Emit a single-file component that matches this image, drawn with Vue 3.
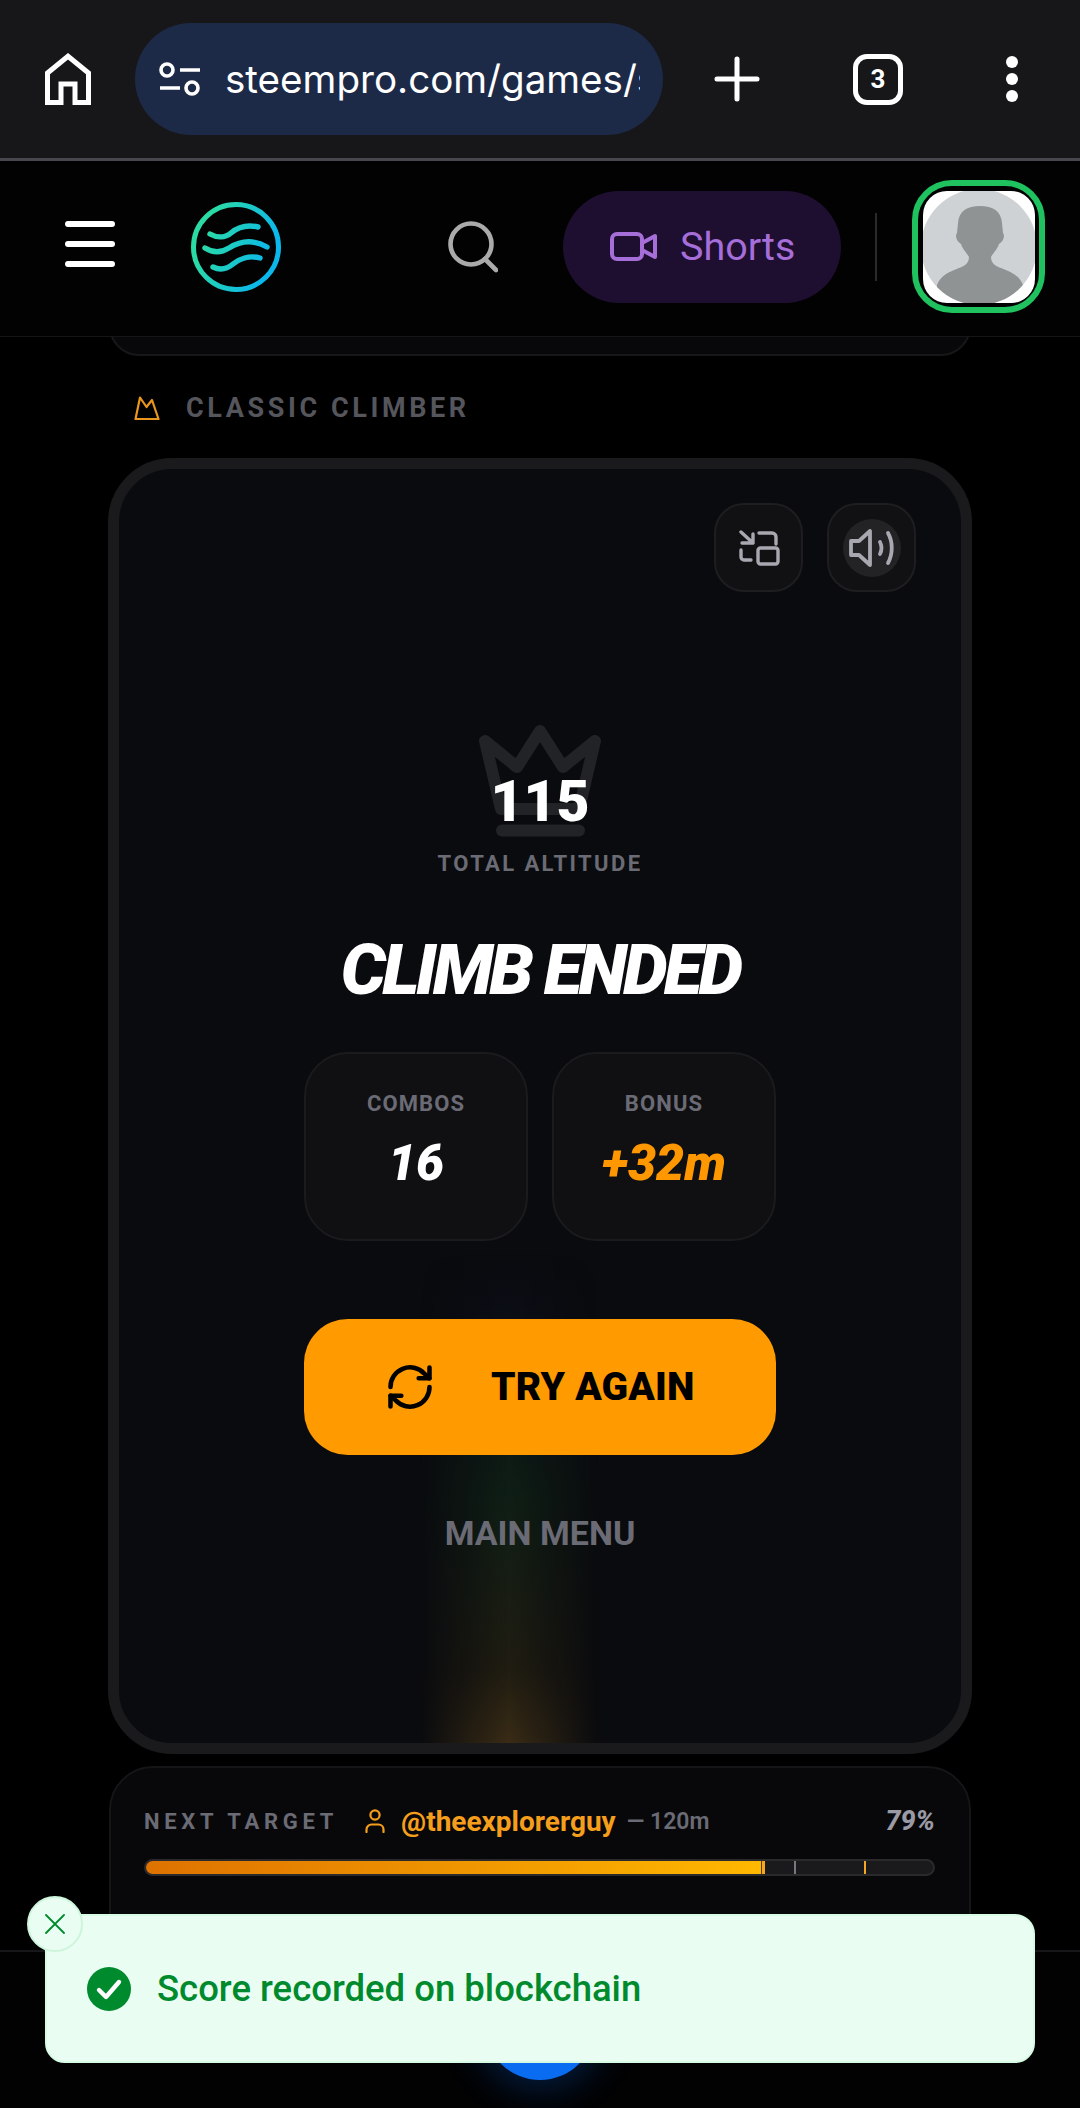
<script setup>
const stats = [
  { label: 'COMBOS', value: '16', accent: false },
  { label: 'BONUS', value: '+32m', accent: true }
]
const markers = [
  { left: 82.4, color: '#77777f' },
  { left: 91.2, color: '#f5a623' }
]
</script>

<template>
  <div class="screen">
    <div class="browser">
      <svg class="home" viewBox="0 0 46 52" fill="none" stroke="#fff" stroke-width="5">
        <path d="M2.5 49.5V20L23 3.2 43.5 20v29.5H30V31H16v18.5z" />
      </svg>
      <div class="url">
        <svg class="tune" viewBox="0 0 42 34" fill="none" stroke="#fff" stroke-width="3.6">
          <circle cx="8" cy="8" r="6" />
          <path d="M21 8h20M1 26h20" />
          <circle cx="33" cy="26" r="6" />
        </svg>
        <span class="url-text">steempro.com/games/s</span>
      </div>
      <svg class="plus" viewBox="0 0 46 46" fill="none" stroke="#fff" stroke-width="5" stroke-linecap="round">
        <path d="M23 3v40M3 23h40" />
      </svg>
      <div class="tabs">3</div>
      <div class="dots"><i></i><i></i><i></i></div>
    </div>

    <header class="topbar">
      <div class="burger"><i></i><i></i><i></i></div>
      <svg class="logo" viewBox="0 0 90 90" fill="none" stroke-width="5.4" stroke-linecap="round">
        <defs>
          <linearGradient id="logoGrad" gradientUnits="userSpaceOnUse" x1="5" y1="30" x2="85" y2="60">
            <stop offset="0.1" stop-color="#2bdba4" />
            <stop offset="0.9" stop-color="#0bb8ec" />
          </linearGradient>
        </defs>
        <circle cx="45" cy="45" r="42.5" stroke="url(#logoGrad)" stroke-width="5" />
        <path d="M19 32C26 36 34 36 40 31S54 22 67 25" stroke="url(#logoGrad)" />
        <path d="M14 46C22 51 30 51 38 46S60 36 76 45" stroke="url(#logoGrad)" />
        <path d="M22 65C30 69 36 67 42 62S58 53 69 56" stroke="url(#logoGrad)" />
      </svg>
      <svg class="search" viewBox="0 0 51 52" fill="none" stroke="#aaa" stroke-width="4.6" stroke-linecap="round">
        <circle cx="24" cy="23" r="20.5" />
        <path d="M38 38l11 11" />
      </svg>
      <div class="shorts">
        <svg viewBox="0 0 47 29" fill="none" stroke="#a56ed8" stroke-width="4" stroke-linejoin="round">
          <rect x="2" y="2" width="30" height="25" rx="5" />
          <path d="M32 11l13-7v21l-13-7z" />
        </svg>
        <span>Shorts</span>
      </div>
      <div class="vline"></div>
      <div class="avatar-ring">
        <div class="avatar">
          <div class="avatar-face">
            <svg viewBox="0 0 112 112">
              <path fill="#909394" d="M57 15C44 15 36 20 35 32L34 42C32 44 33 50 38 53 40 59 44 62 46 66 46 72 42 75 36 77 26 81 18 84 14 94V112H100V94C96 84 88 81 78 77 72 75 68 72 68 66 70 62 74 59 76 53 81 50 82 44 80 42L79 32C78 20 70 15 57 15z" />
            </svg>
          </div>
        </div>
      </div>
    </header>

    <main class="content">
      <div class="prev-card"></div>

      <div class="section-label">
        <svg viewBox="0 0 26 24" fill="none" stroke="#e8961e" stroke-width="2.2" stroke-linejoin="round">
          <path d="M1.5 23 6 1.5l6.5 9.5L18 4l6.5 19z" />
        </svg>
        <span>CLASSIC CLIMBER</span>
      </div>

      <section class="game">
        <div class="glow-strip"></div>
        <div class="game-tools">
          <button class="tool">
            <svg viewBox="0 0 42 36" fill="none" stroke="#a8a8b0" stroke-width="3.4" stroke-linecap="round" stroke-linejoin="round">
              <path d="M3 2l12 11M15 4v9H4" />
              <path d="M21 3h13a4 4 0 0 1 4 4v7" />
              <path d="M3 20v7a3 3 0 0 0 3 3h7" />
              <rect x="20" y="18" width="20" height="16" rx="2.5" />
            </svg>
          </button>
          <button class="tool">
            <span class="tool-inner">
              <svg viewBox="0 0 47 38" fill="none" stroke="#a8a8b0" stroke-width="3.8" stroke-linecap="round" stroke-linejoin="round">
                <path d="M3 12h8L22 2v34L11 26H3z" />
                <path d="M32 13c2 4 2 8 0 12" />
                <path d="M40 4c5 9 5 21 0 30" />
              </svg>
            </span>
          </button>
        </div>

        <div class="score">
          <svg class="score-crown" viewBox="0 0 124 114" fill="none" stroke="#222327" stroke-width="12" stroke-linecap="round" stroke-linejoin="round">
            <path d="M23 85 7 17l32 26L62 7l23 36 32-26-16 68z" />
            <path d="M24 106.5h77" />
          </svg>
          <div class="score-num">115</div>
          <div class="score-label">TOTAL ALTITUDE</div>
        </div>

        <h1 class="title">CLIMB ENDED</h1>

        <div class="stats">
          <div v-for="s in stats" :key="s.label" class="stat">
            <div class="stat-label">{{ s.label }}</div>
            <div class="stat-value" :class="{ 'stat-value--accent': s.accent }">{{ s.value }}</div>
          </div>
        </div>

        <button class="again">
          <svg viewBox="0 0 24 24" fill="none" stroke="#000" stroke-width="2.1" stroke-linecap="round" stroke-linejoin="round">
            <path d="M21 3v5h-5" />
            <path d="M3 12a9 9 0 0 1 15.5-6.3L21 8" />
            <path d="M21 12a9 9 0 0 1-15.5 6.3L3 16" />
            <path d="M3 21v-5h5" />
          </svg>
          <span>TRY AGAIN</span>
        </button>

        <div class="menu-link">MAIN MENU</div>
      </section>

      <section class="target">
        <div class="target-row">
          <span class="target-label">NEXT TARGET</span>
          <svg class="person" viewBox="0 0 20 24" fill="none" stroke="#f59e1b" stroke-width="2.2" stroke-linecap="round">
            <circle cx="10" cy="6" r="4.6" />
            <path d="M1.5 23v-2.5a5 5 0 0 1 5-5h7a5 5 0 0 1 5 5V23" />
          </svg>
          <span class="target-name">@theexplorerguy</span>
          <span class="target-dist">— 120m</span>
          <span class="target-pct">79%</span>
        </div>
        <div class="bar">
          <div class="bar-fill" :style="{ width: '78.7%' }"></div>
          <i class="bar-mark bar-mark--first"></i>
          <i v-for="m in markers" :key="m.left" class="bar-mark" :style="{ left: m.left + '%', background: m.color }"></i>
        </div>
      </section>
    </main>

    <nav class="bottomnav">
      <div class="fab"></div>
    </nav>

    <div class="toast">
      <button class="toast-close">
        <svg viewBox="0 0 20 20" fill="none" stroke="#008a2e" stroke-width="1.8" stroke-linecap="round">
          <path d="M1 1l18 18M19 1 1 19" />
        </svg>
      </button>
      <svg class="toast-check" viewBox="0 0 44 44">
        <circle cx="22" cy="22" r="22" fill="#008a2e" />
        <path d="M12 23l7 7 13-15" fill="none" stroke="#fff" stroke-width="4.4" stroke-linecap="round" stroke-linejoin="round" />
      </svg>
      <span class="toast-text">Score recorded on blockchain</span>
    </div>
  </div>
</template>

<style>
html, body {
  margin: 0;
  background: #000;
}
</style>

<style scoped>
.screen {
  position: relative;
  width: 1080px;
  height: 2108px;
  overflow: hidden;
  background: #000;
  font-family: Roboto, "Liberation Sans", sans-serif;
}

/* browser chrome */
.browser {
  position: relative;
  z-index: 2;
  display: flex;
  align-items: center;
  height: 161px;
  padding-left: 45px;
  box-sizing: border-box;
  background: #17171a;
  border-bottom: 3px solid #47474d;
}
.home {
  width: 46px;
  height: 52px;
  flex: none;
}
.url {
  display: flex;
  align-items: center;
  flex: none;
  width: 528px;
  height: 112px;
  margin-left: 44px;
  padding: 0 23px 0 24px;
  box-sizing: border-box;
  border-radius: 56px;
  background: #1d2a47;
  color: #fff;
}
.tune {
  width: 42px;
  height: 34px;
  flex: none;
}
.url-text {
  margin-left: 24px;
  min-width: 0;
  font-size: 38.6px;
  font-family: Inter, Roboto, sans-serif;
  white-space: nowrap;
  overflow: hidden;
}
.plus {
  width: 46px;
  height: 46px;
  flex: none;
  margin-left: 51px;
}
.tabs {
  flex: none;
  width: 50px;
  height: 51px;
  margin-left: 93px;
  box-sizing: border-box;
  border: 5px solid #fff;
  border-radius: 14px;
  color: #fff;
  font-size: 26px;
  font-weight: 700;
  line-height: 41px;
  text-align: center;
}
.dots {
  display: flex;
  flex-direction: column;
  gap: 5px;
  margin-left: 103px;
}
.dots i {
  width: 12px;
  height: 12px;
  border-radius: 50%;
  background: #fff;
}

/* site header */
.topbar {
  position: relative;
  z-index: 1;
  display: flex;
  align-items: center;
  height: 176px;
  box-sizing: border-box;
  padding: 0 0 4px 65px;
  border-bottom: 1px solid #151518;
  background: #020203;
}
.burger {
  display: flex;
  flex-direction: column;
  gap: 14px;
  margin-bottom: 6px;
}
.burger i {
  width: 50px;
  height: 6px;
  border-radius: 3px;
  background: #fff;
}
.logo {
  width: 90px;
  height: 90px;
  margin-left: 76px;
}
.search {
  width: 51px;
  height: 52px;
  margin-left: 166px;
}
.shorts {
  display: flex;
  align-items: center;
  gap: 23px;
  width: 278px;
  height: 112px;
  margin-left: 65px;
  padding-left: 47px;
  box-sizing: border-box;
  border-radius: 56px;
  background: #1e0f30;
  color: #a56ed8;
  font-size: 39.5px;
}
.shorts svg {
  width: 47px;
  height: 29px;
}
.vline {
  width: 2px;
  height: 68px;
  margin-left: 34px;
  background: #2a2a2d;
}
.avatar-ring {
  display: flex;
  align-items: center;
  justify-content: center;
  width: 133px;
  height: 133px;
  margin-left: 35px;
  box-sizing: border-box;
  border: 6px solid #1fc25f;
  border-radius: 40px;
  background: #000;
}
.avatar {
  display: flex;
  align-items: center;
  justify-content: center;
  width: 112px;
  height: 112px;
  border-radius: 24px;
  background: #fff;
  overflow: hidden;
}
.avatar-face {
  flex: none;
  width: 116px;
  height: 116px;
  border-radius: 50%;
  background: #cfd2d4;
  overflow: hidden;
}
.avatar-face svg {
  display: block;
  width: 112px;
  height: 112px;
  margin: 2px;
}

/* page content */
.content {
  display: flex;
  flex-direction: column;
  align-items: center;
}
.prev-card {
  width: 862px;
  height: 60px;
  margin-top: -41px;
  flex: none;
  box-sizing: border-box;
  border: 2px solid #17171a;
  border-radius: 40px;
  background: #08080a;
}
.section-label {
  display: flex;
  align-items: center;
  align-self: flex-start;
  gap: 26px;
  margin: 40px 0 0 134px;
  height: 24px;
  color: #55555c;
  font-size: 27px;
  font-weight: 700;
  letter-spacing: 3.6px;
}
.section-label svg {
  width: 26px;
  height: 24px;
}

.game {
  position: relative;
  display: flex;
  flex-direction: column;
  align-items: center;
  width: 864px;
  height: 1296px;
  margin-top: 38px;
  box-sizing: border-box;
  border: 11px solid #1a1a1d;
  border-radius: 64px;
  background: #0a0b0e;
  overflow: hidden;
}
.game > * {
  position: relative;
}
.game > .glow-strip {
  position: absolute;
  left: 300px;
  bottom: 0;
  width: 180px;
  height: 490px;
  background: linear-gradient(180deg, rgba(30, 40, 110, 0) 0%, rgba(30, 40, 110, 0.08) 12%, rgba(30, 110, 50, 0.2) 50%, rgba(120, 100, 30, 0.2) 85%, rgba(170, 120, 40, 0.3) 100%);
  -webkit-mask-image: linear-gradient(90deg, transparent, #000 50%, transparent);
  mask-image: linear-gradient(90deg, transparent, #000 50%, transparent);
}
.game > .game-tools {
  position: absolute;
  top: 34px;
  right: 45px;
  display: flex;
  gap: 24px;
}
.tool {
  display: flex;
  align-items: center;
  justify-content: center;
  width: 89px;
  height: 89px;
  padding: 0;
  box-sizing: border-box;
  border: 2px solid #1e1e21;
  border-radius: 30px;
  background: #111114;
}
.tool svg {
  width: 42px;
  height: 36px;
}
.tool-inner {
  display: flex;
  align-items: center;
  justify-content: center;
  width: 58px;
  height: 58px;
  border-radius: 50%;
  background: #232326;
}
.tool-inner svg {
  flex: none;
  width: 47px;
  height: 38px;
}

.score {
  position: relative;
  display: flex;
  flex-direction: column;
  align-items: center;
  margin-top: 255px;
  height: 160px;
  width: 300px;
}
.score-crown {
  position: absolute;
  top: 0;
  left: 88px;
  width: 124px;
  height: 114px;
}
.score-num {
  position: relative;
  margin-top: 44px;
  color: #fff;
  font-size: 57px;
  font-weight: 900;
  line-height: 68px;
}
.score-label {
  position: relative;
  margin-top: 15px;
  color: #6b6b75;
  font-size: 22px;
  font-weight: 700;
  letter-spacing: 2.4px;
}

.title {
  margin: 44px 0 0;
  color: #fff;
  font-size: 71px;
  font-weight: 900;
  font-style: italic;
  letter-spacing: -3.8px;
  line-height: 84px;
}

.stats {
  display: flex;
  gap: 24px;
  margin-top: 40px;
}
.stat {
  width: 224px;
  height: 189px;
  box-sizing: border-box;
  padding-top: 37px;
  border: 2px solid #1b1b1e;
  border-radius: 44px;
  background: #101013;
  text-align: center;
}
.stat-label {
  color: #6b6b75;
  font-size: 22px;
  font-weight: 700;
  letter-spacing: 1.1px;
  line-height: 26px;
}
.stat-value {
  margin-top: 16px;
  color: #fff;
  font-size: 50px;
  font-weight: 900;
  font-style: italic;
  line-height: 60px;
}
.stat-value--accent {
  color: #ff9800;
}

.again {
  display: flex;
  align-items: center;
  width: 472px;
  height: 136px;
  margin-top: 78px;
  padding: 0 0 0 80px;
  box-sizing: border-box;
  border: 0;
  border-radius: 44px;
  background: #ff9b00;
  color: #000;
  font-family: inherit;
  font-size: 39px;
  font-weight: 900;
  letter-spacing: 0.2px;
}
.again svg {
  width: 52px;
  height: 52px;
  margin-right: 55px;
}
.menu-link {
  margin-top: 58px;
  color: #6b6b75;
  font-size: 34px;
  font-weight: 700;
  line-height: 40px;
}

.target {
  width: 862px;
  height: 260px;
  margin-top: 12px;
  padding: 33px 34px 0 33px;
  box-sizing: border-box;
  border: 2px solid #151518;
  border-radius: 44px;
  background: #08080a;
  flex: none;
}
.target-row {
  display: flex;
  align-items: center;
  height: 40px;
}
.target-label {
  color: #6b6b75;
  font-size: 22px;
  font-weight: 700;
  letter-spacing: 4.7px;
}
.person {
  width: 20px;
  height: 24px;
  margin-left: 27px;
}
.target-name {
  margin-left: 16px;
  color: #f59e1b;
  font-size: 28px;
  font-weight: 700;
}
.target-dist {
  margin-left: 11px;
  color: #6b6b75;
  font-size: 23px;
  font-weight: 600;
}
.target-pct {
  margin-left: auto;
  color: #9a9aa5;
  font-size: 27px;
  font-weight: 800;
  font-style: italic;
}
.bar {
  position: relative;
  height: 17px;
  margin-top: 18px;
  box-sizing: border-box;
  border: 2px solid #2a2a2d;
  border-radius: 9px;
  background: #1a1a1d;
}
.bar-fill {
  height: 100%;
  border-radius: 7px 0 0 7px;
  background: linear-gradient(90deg, #de7200, #ffb800);
}
.bar-mark {
  position: absolute;
  top: 0;
  bottom: 0;
  width: 2px;
}
.bar-mark--first {
  left: 78.3%;
  width: 3px;
  background: #f5a623;
  box-shadow: -1px 0 #5a3d10;
}

/* fixed overlays */
.bottomnav {
  position: absolute;
  left: 0;
  right: 0;
  top: 1950px;
  bottom: 0;
  border-top: 2px solid #17171a;
  background: #020203;
}
.fab {
  position: absolute;
  left: 485px;
  top: 18px;
  width: 110px;
  height: 110px;
  border-radius: 50%;
  background: #0a6cf0;
  box-shadow: 0 0 36px 8px rgba(10, 108, 240, 0.28);
}
.toast {
  position: absolute;
  left: 45px;
  top: 1914px;
  display: flex;
  align-items: center;
  width: 990px;
  height: 149px;
  padding-left: 40px;
  box-sizing: border-box;
  border: 2px solid #d8fbe6;
  border-radius: 20px;
  background: #eafdf2;
}
.toast-close {
  position: absolute;
  left: -20px;
  top: -20px;
  display: flex;
  align-items: center;
  justify-content: center;
  width: 56px;
  height: 56px;
  padding: 0;
  box-sizing: border-box;
  border: 2px solid #cdf5dc;
  border-radius: 50%;
  background: #eafdf2;
}
.toast-close svg {
  width: 20px;
  height: 20px;
}
.toast-check {
  width: 44px;
  height: 44px;
  flex: none;
}
.toast-text {
  margin-left: 26px;
  color: #008a2e;
  font-size: 36.5px;
  font-weight: 500;
}
</style>
